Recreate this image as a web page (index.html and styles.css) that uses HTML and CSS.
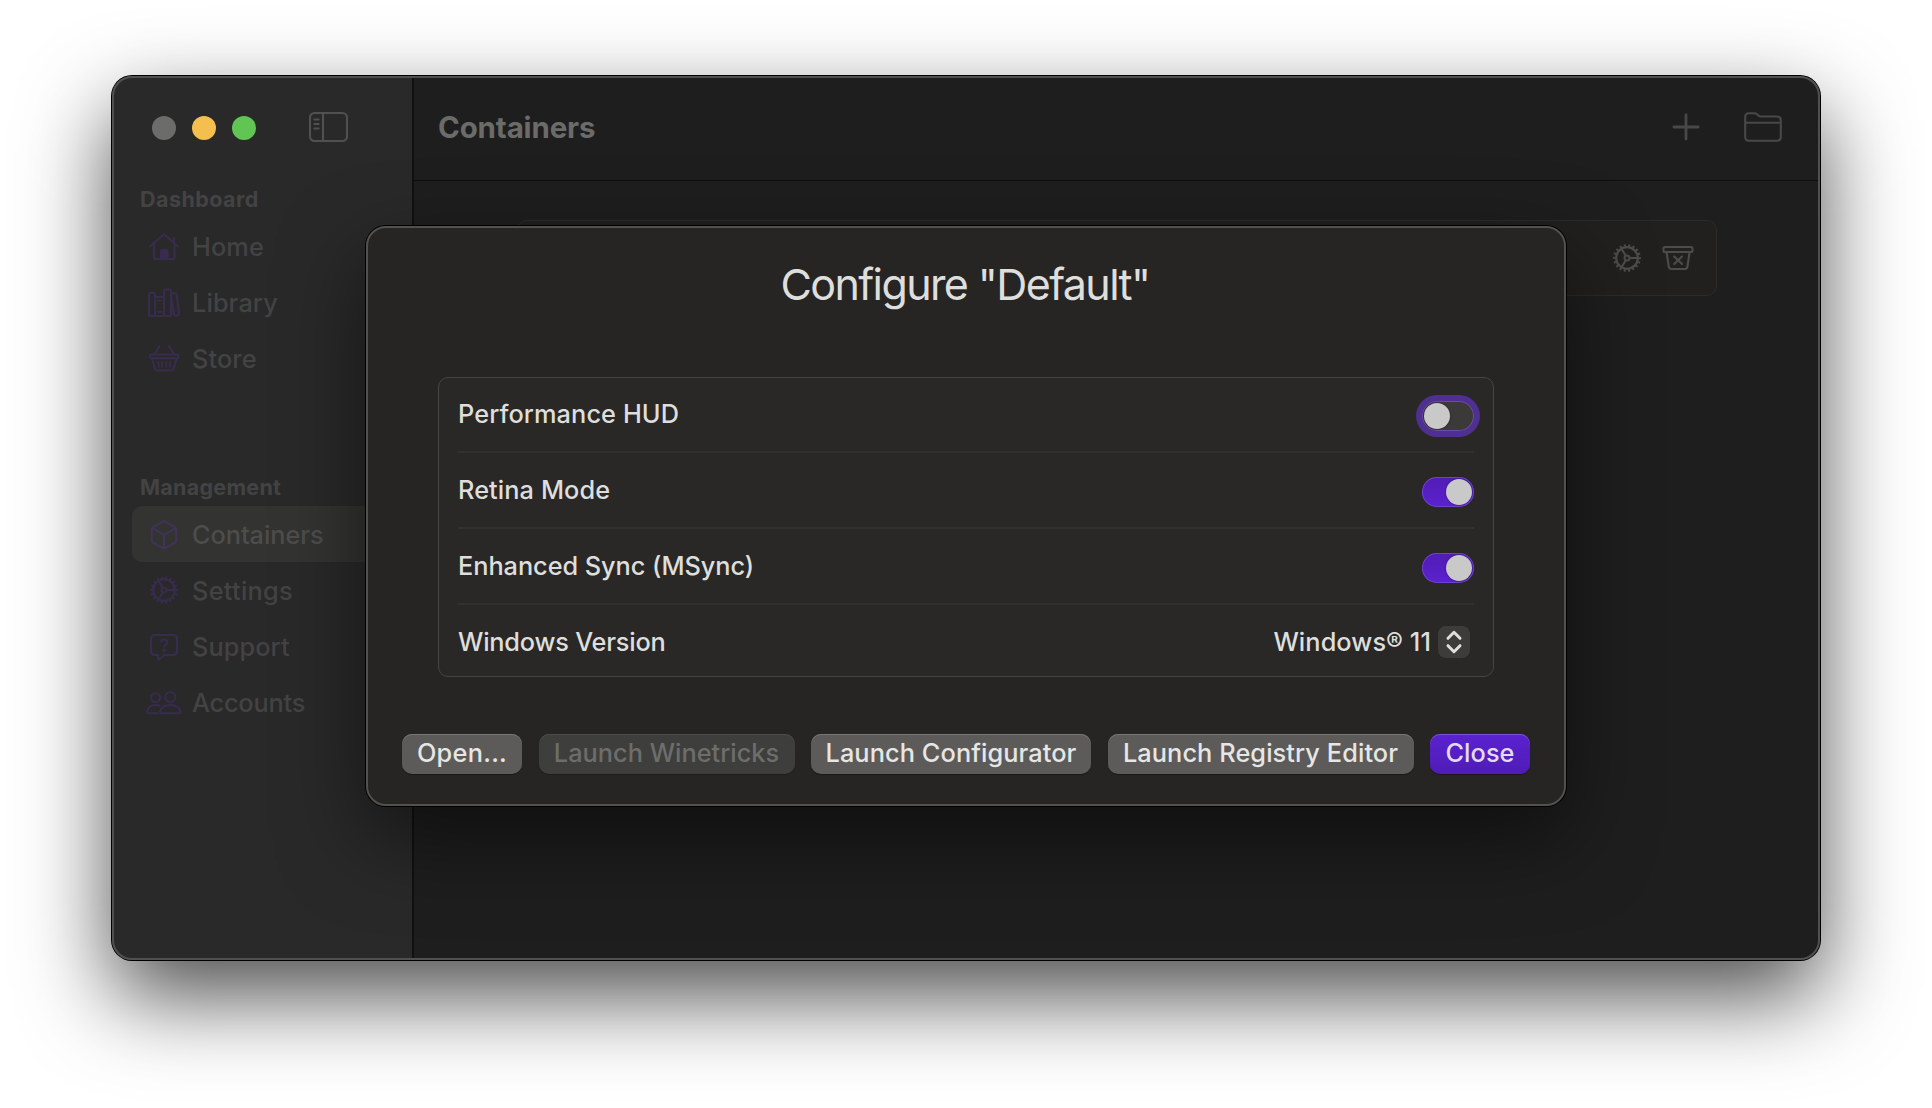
FILE: index.html
```
<!DOCTYPE html>
<html lang="en">
<head>
<meta charset="utf-8">
<title>Containers</title>
<link rel="stylesheet" href="styles.css">
</head>
<body>
<svg class="sprite" aria-hidden="true">
  <symbol id="gear" viewBox="-16 -16 32 32">
    <circle r="10.800" stroke-width="2.200"/>
    <circle r="12.600" stroke-width="2.600" pathLength="180" stroke-dasharray="4.500 5.500" stroke-dashoffset="2"/>
    <circle r="2.500" stroke-width="2"/>
    <path stroke-width="2" d="M2.800 0H10.500M-1.400-2.400-5.300-9.100M-1.400 2.400-5.300 9.100"/>
  </symbol>
</svg>

<div class="window">
  <aside class="sidebar">
    <div class="titlebar">
      <div class="lights"><i class="light light-close"></i><i class="light light-min"></i><i class="light light-zoom"></i></div>
      <svg class="icon toggle-sidebar" width="40" height="32" viewBox="0 0 40 32">
        <rect x="2" y="2" width="37" height="28" rx="4.500"/>
        <path d="M15 2V30"/><path stroke-width="1.800" stroke-linecap="round" d="M6.300 8.500H10.700M6.300 13H10.700M6.300 17.500H10.700"/>
      </svg>
    </div>

    <h2 class="section dashboard">Dashboard</h2>
    <nav class="nav">
      <a class="item"><svg class="icon" width="36" height="32" viewBox="0 0 36 32">
        <path stroke-linecap="round" d="M4 15.500 17.300 3.700Q18 3.100 18.700 3.700L32 15.500"/><path d="M8 13V26.500Q8 28 9.500 28H27Q28.500 28 28.500 26.500V13M28 11.500V6.500"/>
        <path class="solid" d="M15 28V20Q15 19 16 19H20.500Q21.500 19 21.500 20V28Z"/></svg><span>Home</span></a>
      <a class="item"><svg class="icon" width="36" height="32" viewBox="0 0 36 32">
        <rect x="3" y="6" width="6" height="23" rx="1.500"/><rect x="9" y="10" width="9" height="19" rx="1"/><rect x="18" y="2.500" width="7" height="26.500" rx="1.500"/>
        <path d="M25.500 7 29 6Q30.300 5.700 30.600 7L33 26.500Q33.200 28 31.800 28.300L29.500 28.600Q28.200 28.700 28 27.500L25.200 9"/><path stroke-width="1.500" d="M11 13.500H16M11 25H16"/></svg><span>Library</span></a>
      <a class="item"><svg class="icon" width="36" height="32" viewBox="0 0 36 32">
        <rect x="4" y="11.500" width="28.500" height="3.700" rx="1.800"/><path d="M6 15.500 9 25.800Q9.500 27.500 11.300 27.500H25.500Q27.200 27.500 27.700 25.800L30.500 15.500M8.500 11 14 2.500M28 11 22.500 2.500"/>
        <path stroke-width="1.800" d="M12 18.500 13 24.500M16.200 18.500V24.500M20.300 18.500V24.500M24.600 18.500 23.600 24.500"/></svg><span>Store</span></a>
    </nav>

    <h2 class="section management">Management</h2>
    <nav class="nav">
      <a class="item selected"><svg class="icon" width="36" height="32" viewBox="0 0 36 32">
        <path d="M16.800 2.700Q18 2.100 19.200 2.700L29 8.100Q30.200 8.800 30.200 10.100V21.500Q30.200 22.800 29 23.500L19.200 29.100Q18 29.700 16.800 29.100L7 23.500Q5.800 22.800 5.800 21.500V10.100Q5.800 8.800 7 8.100ZM6.300 9.200 18 15.800 29.700 9.200M18 15.800V29"/></svg><span class="tight">Containers</span></a>
      <a class="item"><svg class="icon" width="36" height="32"><use href="#gear" x="2" y="-1" width="32" height="32"/></svg><span class="loose">Settings</span></a>
      <a class="item"><svg class="icon" width="36" height="32" viewBox="0 0 36 32">
        <path d="M8.500 4H27.500Q31 4 31 7.500V20.500Q31 24 27.500 24H18.500L13.500 28.200Q12.300 29 12.300 27.500V24H8.500Q5 24 5 20.500V7.500Q5 4 8.500 4Z"/>
        <path d="M14.800 11.500Q15 8.500 18.200 8.500 21.300 8.500 21.300 11.200 21.300 12.800 19.600 13.800 18.100 14.700 18.100 16.300"/><circle class="solid" cx="18.100" cy="19.600" r=".7"/></svg><span>Support</span></a>
      <a class="item"><svg class="icon" width="36" height="32" viewBox="0 0 36 32">
        <circle cx="9.600" cy="10.700" r="4.500"/><circle cx="24.300" cy="10" r="5"/>
        <path d="M12.500 26.300H2.300Q1.200 26.300 1.200 25 2 18 9.600 18 12.500 18 14.500 19.200"/><path d="M15.300 26.300Q14 26.300 14 25 15 18 24.300 18 33.500 18 34.600 25 34.600 26.300 33.300 26.300Z"/></svg><span class="narrow">Accounts</span></a>
    </nav>
  </aside>

  <main class="main">
    <header class="toolbar">
      <h1>Containers</h1>
      <svg class="icon" width="28" height="28" viewBox="0 0 28 28"><path stroke-width="2.800" stroke-linecap="round" d="M14 1.900V26.100M1.900 14H26.100"/></svg>
      <svg class="icon folder" width="40" height="32" viewBox="0 0 40 32"><path d="M2.200 25.500V6Q2.200 2.200 6 2.200H11Q12.800 2.200 14 3.300L15.500 4.600Q16.500 5.500 18 5.500H34Q37.800 5.500 37.800 9.300V25.500Q37.800 29.800 34 29.800H6Q2.200 29.800 2.200 25.500ZM2.200 11.800H37.800"/></svg>
    </header>
    <section class="card">
      <svg class="icon" width="32" height="32"><use href="#gear" width="32" height="32"/></svg>
      <svg class="icon" width="32" height="32" viewBox="0 0 32 32"><rect x="1.500" y="5" width="29" height="5" rx="1.500"/><path d="M4.500 10 6.800 24.800Q7.200 27 9.500 27H22.800Q25 27 25.400 24.800L27.600 10"/><path stroke-linecap="round" d="M12.200 14.500 20 22M20 14.500 12.200 22"/></svg>
    </section>
  </main>

  <div class="overlay">
    <div class="dialog">
      <h1 class="dialog-title">Configure "Default"</h1>
      <div class="group">
        <label class="row"><span>Performance HUD</span><i class="switch focused"></i></label>
        <label class="row"><span>Retina Mode</span><i class="switch on"></i></label>
        <label class="row"><span class="tight">Enhanced Sync (MSync)</span><i class="switch on"></i></label>
        <label class="row last"><span class="narrow">Windows Version</span>
          <span class="picker"><span>Windows® 11</span>
            <svg class="stepper" width="32" height="32" viewBox="0 0 32 32"><path d="M10 12.300 16 6.300 22 12.300M10 19.700 16 25.700 22 19.700"/></svg>
          </span>
        </label>
      </div>
      <div class="actions">
        <button class="btn open">Open...</button>
        <button class="btn winetricks" disabled>Launch Winetricks</button>
        <button class="btn configurator">Launch Configurator</button>
        <button class="btn registry">Launch Registry Editor</button>
        <button class="btn primary">Close</button>
      </div>
    </div>
  </div>
</div>
</body>
</html>
```
FILE: styles.css
```
* { box-sizing: border-box; }

body {
  margin: 0;
  height: 1108px;
  padding: 76px 112px 148px;
  background: #fff;
  overflow: hidden;
  font: 450 25.3px "Inter", "Liberation Sans", sans-serif;
  letter-spacing: .1px;
}

h1, h2 { margin: 0; }

.sprite { position: absolute; width: 0; height: 0; }

.icon {
  display: block;
  flex: none;
  fill: none;
  stroke: currentColor;
  stroke-width: 2.100;
  stroke-linejoin: round;
}
.icon .solid { fill: currentColor; }

.tight { letter-spacing: -.04px; }
.narrow { letter-spacing: -.2px; }
.loose { letter-spacing: .3px; }

/* Window */
.window {
  position: relative;
  display: flex;
  height: 884px;
  border-radius: 20px;
  background: #1e1e1e;
  box-shadow: 0 0 0 1px #000, 0 36px 88px rgba(0, 0, 0, .7);
}
.window::after {
  content: "";
  position: absolute;
  inset: 0;
  border: 2px solid #505050;
  border-radius: 20px;
  pointer-events: none;
}

/* Sidebar */
.sidebar {
  width: 302px;
  border-right: 2px solid #111;
  border-radius: 20px 0 0 20px;
  background: #292929;
  padding: 0 20px;
  color: #434343;
}
.titlebar {
  display: flex;
  align-items: center;
  height: 98px;
  padding: 5px 0 0 20px;
}
.lights { display: flex; gap: 16px; }
.light { width: 24px; height: 24px; border-radius: 50%; }
.light-close { background: #6c6c6b; }
.light-min { background: #f5bf4f; }
.light-zoom { background: #61c554; }
.toggle-sidebar { margin: 0 0 2px 52px; color: #505050; }

.section {
  height: 44px;
  padding: 0 8px;
  font-size: 21.500px;
  font-weight: 650;
  line-height: 50px;
  letter-spacing: .45px;
}
.management { margin-top: 76px; letter-spacing: .28px; }

.item {
  display: flex;
  align-items: center;
  gap: 10px;
  height: 56px;
  padding: 0 14px;
  border-radius: 10px;
}
.item .icon { color: #382c4e; margin-top: 2px; }
.selected { background: #333331; color: #4d4d4c; }
.selected .icon { color: #413358; }

/* Content */
.main { flex: 1; }
.toolbar {
  display: flex;
  align-items: center;
  height: 105px;
  padding: 0 37px 3px 24px;
  border-bottom: 1px solid #0e0e0e;
  color: #484848;
}
.toolbar h1 {
  flex: 1;
  font-size: 29.500px;
  font-weight: 650;
  letter-spacing: -.15px;
  color: #6b6b6a;
}
.folder { margin-left: 43px; }
.card {
  display: flex;
  align-items: center;
  justify-content: flex-end;
  gap: 19px;
  height: 76px;
  margin: 39px 103px 0;
  padding-right: 22px;
  border: 1px solid #2b2b29;
  border-radius: 10px;
  background: #21201e;
  color: #4c4c4b;
}

/* Configuration sheet */
.overlay {
  position: absolute;
  inset: 0;
  display: flex;
  justify-content: center;
  align-items: flex-start;
  padding-top: 150px;
  border-radius: 20px;
  overflow: hidden;
}
.dialog {
  width: 1200px;
  height: 580px;
  padding: 30px 34px 30px;
  border: 2px solid #52514f;
  border-radius: 20px;
  background: #262523;
  color: #dededd;
  box-shadow: 0 0 0 1px #000, 0 32px 84px rgba(0, 0, 0, .5);
}
.dialog-title {
  height: 52px;
  padding-right: 2px;
  font-size: 43px;
  font-weight: 430;
  line-height: 52px;
  letter-spacing: -1.600px;
  text-align: center;
}
.group {
  margin: 67px 36px 57px;
  padding: 0 19px;
  height: 300px;
  border: 1px solid #454543;
  border-radius: 10px;
  background: #292826;
}
.row {
  display: flex;
  align-items: center;
  justify-content: space-between;
  height: 76px;
  border-bottom: 2px solid #31312f;
}
.row > span { margin-top: -2px; }
.row:first-child { height: 75px; }
.row.last { height: 71px; padding-top: 3px; border: 0; }
.switch {
  position: relative;
  width: 52px;
  height: 30px;
  margin-top: 4px;
  border-radius: 15px;
  background: #3b3a39;
}
.switch::before {
  content: "";
  position: absolute;
  top: 2px;
  left: 2px;
  width: 26px;
  height: 26px;
  border-radius: 50%;
  background: #c9c9c9;
  box-shadow: 0 0 2px rgba(0, 0, 0, .5);
}
.switch.on {
  background: linear-gradient(#501cb4, #5b22d0);
  box-shadow: inset 0 0 0 1px #6d43cc;
}
.switch.on::before { left: 24px; }
.switch.focused { margin-top: 3px; box-shadow: inset 0 0 0 1px #6a4cae, 0 0 0 6px #4f3092; }

.picker { display: flex; align-items: center; gap: 7px; padding-right: 4px; }
.stepper {
  margin-top: 2px;
  border-radius: 8px;
  background: #3d3c3b;
  fill: none;
  stroke: #dededd;
  stroke-width: 3;
  stroke-linecap: round;
  stroke-linejoin: round;
}

.actions { display: flex; justify-content: space-between; }
.btn {
  height: 40px;
  padding: 0 0 4px;
  border: 0;
  border-radius: 10px;
  background: #5c5b59;
  box-shadow: inset 0 1px 0 #777674, 0 1px 1px rgba(0, 0, 0, .35);
  color: #e6e6e5;
  font: inherit;
  letter-spacing: .1px;
  white-space: nowrap;
}
.btn:disabled {
  background: #3e3e3c;
  box-shadow: inset 0 1px 0 #4b4b49, 0 1px 1px rgba(0, 0, 0, .2);
  color: #6d6d6b;
}
.open { width: 120px; letter-spacing: .3px; }
.winetricks { width: 256px; letter-spacing: .02px; }
.configurator { width: 280px; }
.registry { width: 306px; }
.btn.primary {
  width: 100px;
  background: linear-gradient(#5b22d0, #4f1cb6);
  box-shadow: inset 0 1px 0 #7c50dc, 0 1px 1px rgba(0, 0, 0, .35);
  color: #e4dcf6;
}
```
